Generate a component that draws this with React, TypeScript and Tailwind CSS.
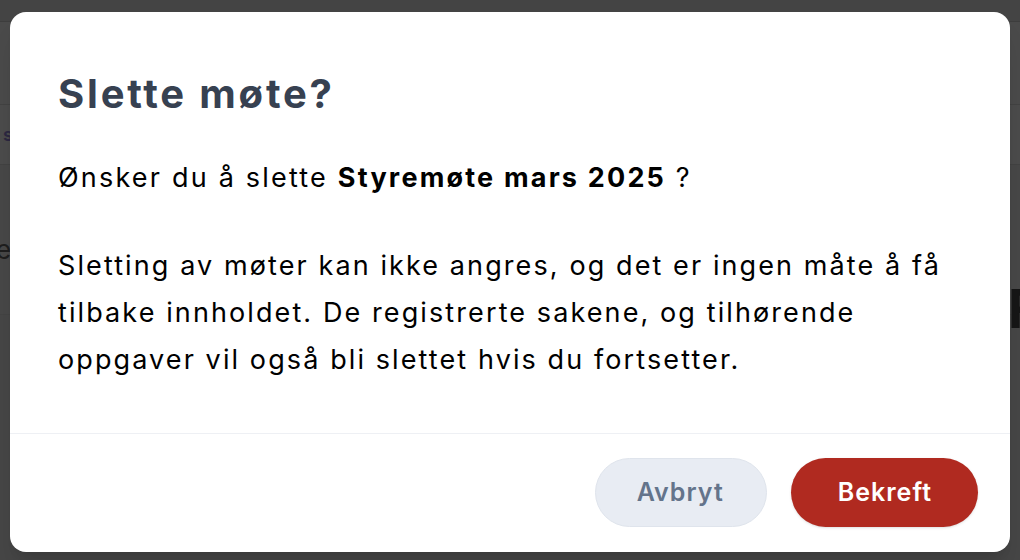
import React from "react";

export default function App() {
  return (
    <div
      className="relative w-[1020px] h-[560px] overflow-hidden bg-[#474747]"
      style={{ fontFamily: "Inter, 'Noto Sans', sans-serif" }}
    >
      {/* background page fragments behind the overlay */}
      <div className="absolute inset-0 flex flex-col">
        <div className="h-[22px] border-b border-[#3d3d3d] bg-[#444444]" />
        <div className="h-[83px] border-b border-[#424242] bg-[#4a4a4a]" />
        <div className="h-[60px] border-b border-[#424242] bg-[#4b4b4b] flex items-center pl-[3px]">
          <span className="text-[18px] font-semibold text-[#2c2740]">s</span>
        </div>
        <div className="h-[150px] border-b border-[#434343] bg-[#474747] flex items-center pt-[20px]">
          <span className="-ml-[4px] text-[26px] text-[#1e1e1e]">e</span>
        </div>
        <div className="flex-1 bg-[#464646]" />
      </div>
      <div className="absolute right-0 top-[282px] w-[10px] overflow-hidden">
        <span className="block text-[54px] font-bold leading-none text-[#161616] -ml-[2px]">F</span>
      </div>

      <div className="relative flex h-full items-start justify-center pt-[12px]">
        <div className="w-[1000px] rounded-[16px] bg-white shadow-xl">
          <div className="px-[48px] pt-[58px] pb-[50px]">
            <h1 className="text-[40px] font-bold leading-[48px] tracking-[2.8px] text-[#374151]">
              Slette møte?
            </h1>
            <p className="mt-[42px] text-[27px] leading-[36px] tracking-[2.2px] text-black">
              Ønsker du å slette <strong className="font-bold">Styremøte mars 2025</strong> ?
            </p>
            <p className="mt-[46px] text-[27px] leading-[47px] tracking-[2.1px] text-black">
              Sletting av møter kan ikke angres, og det er ingen måte å få tilbake innholdet. De registrerte sakene, og tilhørende oppgaver vil også bli slettet hvis du fortsetter.
            </p>
          </div>
          <div className="flex justify-end gap-[24px] border-t border-[#eef0f4] px-[32px] pt-[24px] pb-[25px]">
            <button className="h-[69px] rounded-full border border-[#dfe4ec] bg-[#e8ecf3] pl-[41px] pr-[42px] text-[25px] font-semibold tracking-[1px] text-[#64748b]">
              Avbryt
            </button>
            <button className="h-[69px] rounded-full bg-[#b02a20] pl-[47px] pr-[46px] text-[25px] font-semibold tracking-[1px] text-white shadow-sm">
              Bekreft
            </button>
          </div>
        </div>
      </div>
    </div>
  );
}
